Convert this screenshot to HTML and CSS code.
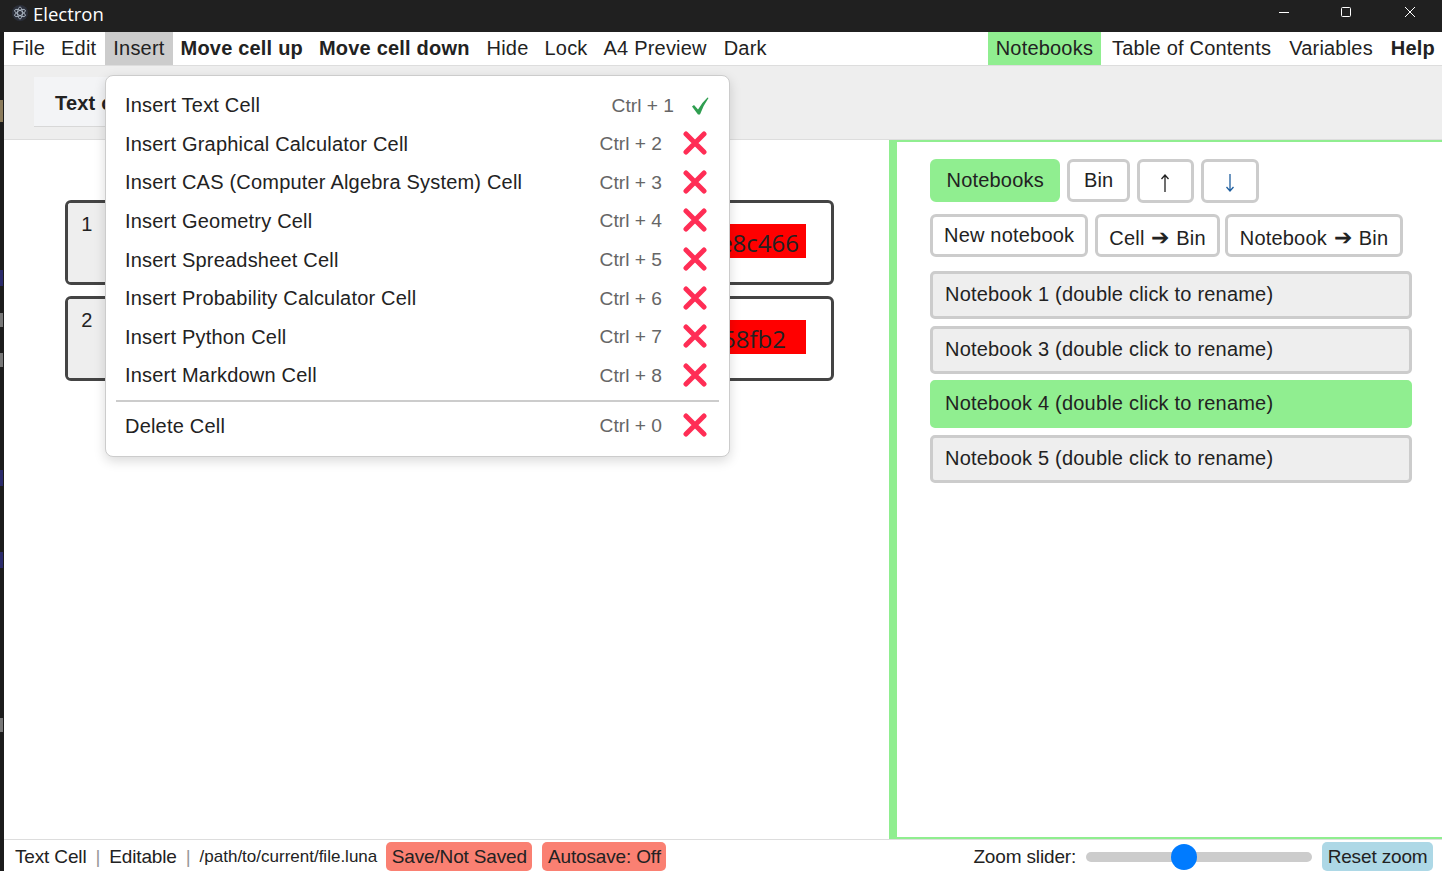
FILE: index.html
```html
<!DOCTYPE html>
<html lang="en">
<head>
  <meta charset="UTF-8">
  <title>Electron</title>
  <link rel="stylesheet" href="styles.css">
</head>
<body>
  <div class="titlebar">
    <div class="app-title">
      <svg class="app-icon" width="16" height="16" viewBox="0 0 16 16">
        <circle cx="8" cy="8" r="8" fill="#2b2f3a"/>
        <g fill="none" stroke="#b8c4d0" stroke-width="0.8">
          <ellipse cx="8" cy="8" rx="6" ry="2.4" transform="rotate(30 8 8)"/>
          <ellipse cx="8" cy="8" rx="6" ry="2.4" transform="rotate(90 8 8)"/>
          <ellipse cx="8" cy="8" rx="6" ry="2.4" transform="rotate(150 8 8)"/>
        </g>
      </svg>
      <span>Electron</span>
    </div>
    <div class="window-btns">
      <svg class="window-btn" width="12" height="12" viewBox="0 0 12 12"><path d="M1 6.500h10" stroke="#fff" fill="none"/></svg>
      <svg class="window-btn" width="12" height="12" viewBox="0 0 12 12"><rect x="1.500" y="1.500" width="9" height="9" rx="1" stroke="#fff" fill="none"/></svg>
      <svg class="window-btn close" width="12" height="12" viewBox="0 0 12 12"><path d="M1 1l10 10M11 1L1 11" stroke="#fff" fill="none"/></svg>
    </div>
  </div>

  <div class="app">
    <nav class="menubar">
      <div class="menu-group">
        <a class="menu-item">File</a>
        <a class="menu-item edit">Edit</a>
        <a class="menu-item open">Insert</a>
        <a class="menu-item bold">Move cell up</a>
        <a class="menu-item bold">Move cell down</a>
        <a class="menu-item nudge">Hide</a>
        <a class="menu-item">Lock</a>
        <a class="menu-item">A4 Preview</a>
        <a class="menu-item nudge">Dark</a>
      </div>
      <div class="menu-group right">
        <a class="menu-item active">Notebooks</a>
        <a class="menu-item">Table of Contents</a>
        <a class="menu-item">Variables</a>
        <a class="menu-item bold help">Help</a>
      </div>
    </nav>

    <div class="toolbar">
      <div class="tool-tab">Text cell</div>
    </div>

    <div class="main">
      <div class="cells">
        <div class="cell">
          <div class="cell-num">1</div>
          <div class="cell-body"><span class="cell-id">4f2e8c466</span></div>
        </div>
        <div class="cell">
          <div class="cell-num">2</div>
          <div class="cell-body"><span class="cell-id short">a7c58fb2</span></div>
        </div>
      </div>

      <aside class="sidebar">
        <div class="btn-row">
          <button class="btn btn-on">Notebooks</button>
          <button class="btn btn-bin">Bin</button>
          <button class="btn btn-arrow" aria-label="Up">
            <svg width="10" height="18" viewBox="0 0 10 18"><path d="M5 18V1M1.500 5L5 1l3.500 4" fill="none" stroke="#222" stroke-width="1.300"/></svg>
          </button>
          <button class="btn btn-arrow" aria-label="Down">
            <svg width="10" height="18" viewBox="0 0 10 18"><path d="M5 0v17M1.500 13L5 17l3.500-4" fill="none" stroke="#1f5f9f" stroke-width="1.300"/></svg>
          </button>
        </div>
        <div class="btn-row">
          <button class="btn btn-new">New notebook</button>
          <button class="btn btn-move">Cell <span class="arrow">➔</span> Bin</button>
          <button class="btn btn-move nb">Notebook <span class="arrow">➔</span> Bin</button>
        </div>
        <div class="notebooks">
          <div class="notebook">Notebook 1 (double click to rename)</div>
          <div class="notebook">Notebook 3 (double click to rename)</div>
          <div class="notebook current">Notebook 4 (double click to rename)</div>
          <div class="notebook">Notebook 5 (double click to rename)</div>
        </div>
      </aside>
    </div>

    <footer class="statusbar">
      <div class="status-left">
        <span>Text Cell</span>
        <span class="sep">|</span>
        <span>Editable</span>
        <span class="sep">|</span>
        <span class="path">/path/to/current/file.luna</span>
        <span class="pill">Save/Not Saved</span>
        <span class="pill">Autosave: Off</span>
      </div>
      <div class="status-right">
        <span>Zoom slider:</span>
        <input class="zoom" type="range" min="0" max="100" value="42.5" step="0.5">
        <span class="reset">Reset zoom</span>
      </div>
    </footer>

    <div class="dropdown">
      <div class="drop-row">
        <span>Insert Text Cell</span><span class="keys keys-on">Ctrl + 1</span>
        <svg class="check" width="18" height="18" viewBox="0 0 18 18"><path d="M1 9.500L3 8L7 12.500Q10.500 6 16.500 .5L17.500 1Q12.500 8 9 17.500L7 17.500Z" fill="#2f9e50"/></svg>
      </div>
      <div class="drop-row">
        <span>Insert Graphical Calculator Cell</span><span class="keys">Ctrl + 2</span>
        <svg class="cross" width="24" height="24" viewBox="0 0 24 24"><path d="M3 3l18 18M21 3L3 21"/></svg>
      </div>
      <div class="drop-row">
        <span>Insert CAS (Computer Algebra System) Cell</span><span class="keys">Ctrl + 3</span>
        <svg class="cross" width="24" height="24" viewBox="0 0 24 24"><path d="M3 3l18 18M21 3L3 21"/></svg>
      </div>
      <div class="drop-row">
        <span>Insert Geometry Cell</span><span class="keys">Ctrl + 4</span>
        <svg class="cross" width="24" height="24" viewBox="0 0 24 24"><path d="M3 3l18 18M21 3L3 21"/></svg>
      </div>
      <div class="drop-row">
        <span>Insert Spreadsheet Cell</span><span class="keys">Ctrl + 5</span>
        <svg class="cross" width="24" height="24" viewBox="0 0 24 24"><path d="M3 3l18 18M21 3L3 21"/></svg>
      </div>
      <div class="drop-row">
        <span>Insert Probability Calculator Cell</span><span class="keys">Ctrl + 6</span>
        <svg class="cross" width="24" height="24" viewBox="0 0 24 24"><path d="M3 3l18 18M21 3L3 21"/></svg>
      </div>
      <div class="drop-row">
        <span>Insert Python Cell</span><span class="keys">Ctrl + 7</span>
        <svg class="cross" width="24" height="24" viewBox="0 0 24 24"><path d="M3 3l18 18M21 3L3 21"/></svg>
      </div>
      <div class="drop-row">
        <span>Insert Markdown Cell</span><span class="keys">Ctrl + 8</span>
        <svg class="cross" width="24" height="24" viewBox="0 0 24 24"><path d="M3 3l18 18M21 3L3 21"/></svg>
      </div>
      <hr class="drop-sep">
      <div class="drop-row">
        <span>Delete Cell</span><span class="keys">Ctrl + 0</span>
        <svg class="cross" width="24" height="24" viewBox="0 0 24 24"><path d="M3 3l18 18M21 3L3 21"/></svg>
      </div>
    </div>
  </div>
</body>
</html>
```

FILE: styles.css
```css
* {
  box-sizing: border-box;
}
html, body {
  height: 100%;
}
body {
  margin: 0;
  display: flex;
  flex-direction: column;
  overflow: hidden;
  font-family: "Liberation Sans", Arial, sans-serif;
  font-size: 20px;
  letter-spacing: 0.2px;
  color: #222;
  background: #fff;
}

/* window frame */
.titlebar {
  height: 32px;
  flex: none;
  display: flex;
  justify-content: space-between;
  align-items: center;
  background: #202020;
  color: #fff;
}
.app-title {
  display: flex;
  align-items: center;
  gap: 5px;
  padding: 0 0 6px 12px;
  font-family: "Open Sans", sans-serif;
  font-size: 18.500px;
  letter-spacing: 0;
}
.window-btns {
  display: flex;
  gap: 50px;
  padding: 0 26px 8px 0;
}
.window-btn {
  display: block;
}
.window-btn.close {
  margin-left: 2px;
}

/* the 4px strip on the left, with what shows through from behind the window */
.app {
  position: relative;
  flex: 1;
  min-height: 0;
  display: flex;
  flex-direction: column;
  padding-left: 4px;
  background-color: #1c1c1c;
  background-repeat: no-repeat;
  background-image:
    linear-gradient(#8a7a5a, #8a7a5a),
    linear-gradient(#2a2a6a, #2a2a6a),
    linear-gradient(#777, #777),
    linear-gradient(#777, #777),
    linear-gradient(#2a2a6a, #2a2a6a),
    linear-gradient(#2a2a6a, #2a2a6a),
    linear-gradient(#777, #777);
  background-size: 3px 22px, 3px 16px, 3px 14px, 3px 14px, 3px 16px, 3px 16px, 3px 14px;
  background-position: 0 68px, 0 238px, 0 281px, 0 321px, 0 438px, 0 520px, 0 686px;
}

/* menu */
.menubar {
  height: 34px;
  flex: none;
  display: flex;
  justify-content: space-between;
  border-bottom: 1px solid #ddd;
  background: #fff;
}
.menu-group {
  display: flex;
}
.menu-group.right {
  gap: 2px;
}
.menu-item {
  display: flex;
  align-items: center;
  padding: 0 8px;
}
.menu-item.edit {
  margin-right: 1px;
}
.menu-item.nudge {
  margin-left: 1px;
}
.menu-item.bold {
  font-weight: bold;
}
.menu-item.help {
  padding-right: 7px;
}
.menu-item.open {
  background: #ccc;
}
.menu-item.active {
  margin-right: 1px;
  background: #90ee90;
}

.toolbar {
  height: 74px;
  flex: none;
  padding: 11px 0 0 30px;
  background: #eee;
  border-bottom: 1px solid #ddd;
}
.tool-tab {
  width: 200px;
  height: 50px;
  padding: 15px 21px;
  font-weight: bold;
  background: #f3f4f6;
  border-bottom: 1px solid #d8d8d8;
}

.main {
  flex: 1;
  min-height: 0;
  display: flex;
  background: #fff;
}

/* cells */
.cells {
  flex: 1;
  padding: 60px 55px 0 61px;
}
.cell {
  display: flex;
  height: 85px;
  margin-bottom: 11px;
  border: 3px solid #444;
  border-radius: 6px;
  overflow: hidden;
}
.cell-num {
  width: 60px;
  padding: 10px 22px 0 0;
  text-align: center;
  background: #eee;
}
.cell-body {
  flex: 1;
  display: flex;
  justify-content: flex-end;
  align-items: flex-start;
  padding: 21px 25px 0 0;
}
.cell-id {
  padding: 5px 7px 1px;
  font-family: "Open Sans", sans-serif;
  font-size: 24px;
  line-height: 28px;
  letter-spacing: 0;
  background: #f00;
}
.cell-id.short {
  padding-right: 20px;
}

/* notebooks panel */
.sidebar {
  width: 553px;
  flex: none;
  padding: 17px 30px 0 33px;
  border-left: 8px solid #90ee90;
  border-top: 2px solid #90ee90;
  border-bottom: 2px solid #90ee90;
}
.btn-row {
  display: flex;
  align-items: flex-start;
  gap: 7px;
  margin-bottom: 11px;
}
.btn {
  height: 43px;
  padding: 0 14px;
  font-family: inherit;
  font-size: 20px;
  letter-spacing: inherit;
  color: #222;
  background: #fff;
  border: 3px solid #ccc;
  border-radius: 6px;
}
.btn-on {
  padding: 0 13.500px;
  background: #90ee90;
  border-color: #90ee90;
}
.btn-bin {
  padding: 0 13.500px;
}
.btn-arrow {
  display: flex;
  justify-content: center;
  padding: 12px 0 0;
  height: 44px;
  width: 57px;
}
.btn-arrow:last-child {
  width: 58px;
}
.btn-new {
  padding: 0 11px;
}
.btn-move {
  padding: 4px 11px 0;
}
.btn-move.nb {
  margin-left: -2px;
  padding: 4px 12px 0;
}
.arrow {
  margin: 0 1px;
  font-size: 22px;
}
.notebooks {
  display: flex;
  flex-direction: column;
  gap: 6.670px;
  margin-top: 14px;
}
.notebook {
  height: 48px;
  padding: 0 12px;
  line-height: 40px;
  background: #eee;
  border: 3px solid #ccc;
  border-radius: 5px;
}
.notebook.current {
  background: #90ee90;
  border-color: #90ee90;
}

/* status bar */
.statusbar {
  height: 32px;
  flex: none;
  display: flex;
  justify-content: space-between;
  align-items: center;
  padding: 2px 9px 0 11px;
  font-size: 19px;
  letter-spacing: -0.150px;
  background: #fff;
  border-top: 1px solid #ddd;
}
.status-left, .status-right {
  display: flex;
  align-items: center;
}
.sep {
  margin: 0 9px;
  color: #999;
}
.path {
  font-size: 17px;
  letter-spacing: 0;
  margin-right: 9px;
}
.pill {
  height: 29px;
  margin-right: 10px;
  padding: 0 5.500px;
  line-height: 29px;
  background: #fa8072;
  border-radius: 5px;
}
.zoom {
  appearance: none;
  width: 226px;
  height: 10px;
  margin: 0 10px;
  background: #ccc;
  border-radius: 5px;
}
.zoom::-webkit-slider-thumb {
  appearance: none;
  width: 26px;
  height: 26px;
  border-radius: 50%;
  background: #007bff;
}
.reset {
  height: 29px;
  padding: 0 5.500px;
  line-height: 29px;
  background: #add8e6;
  border-radius: 5px;
}

/* insert dropdown */
.dropdown {
  position: absolute;
  left: 105px;
  top: 43px;
  width: 625px;
  height: 382px;
  padding: 10.400px 10px 10px;
  background: #fff;
  border: 1px solid #ccc;
  border-radius: 8px;
  box-shadow: 0 4px 12px rgba(0, 0, 0, 0.15);
}
.drop-row {
  display: flex;
  align-items: center;
  height: 38.600px;
  padding: 0 9px;
}
.drop-row span:first-child {
  flex: 1;
}
.keys {
  font-size: 19.200px;
  letter-spacing: 0;
  color: #666;
  margin-right: 21px;
}
.keys-on {
  margin-right: 17px;
}
.check {
  margin-right: 1px;
}
.cross {
  margin: -2px 3px 0 0;
}
.cross path {
  fill: none;
  stroke: #ff2d55;
  stroke-width: 5;
  stroke-linecap: round;
}
.drop-sep {
  margin: 5px 0 4.600px;
  border: none;
  height: 2px;
  background: #ccc;
}
```
